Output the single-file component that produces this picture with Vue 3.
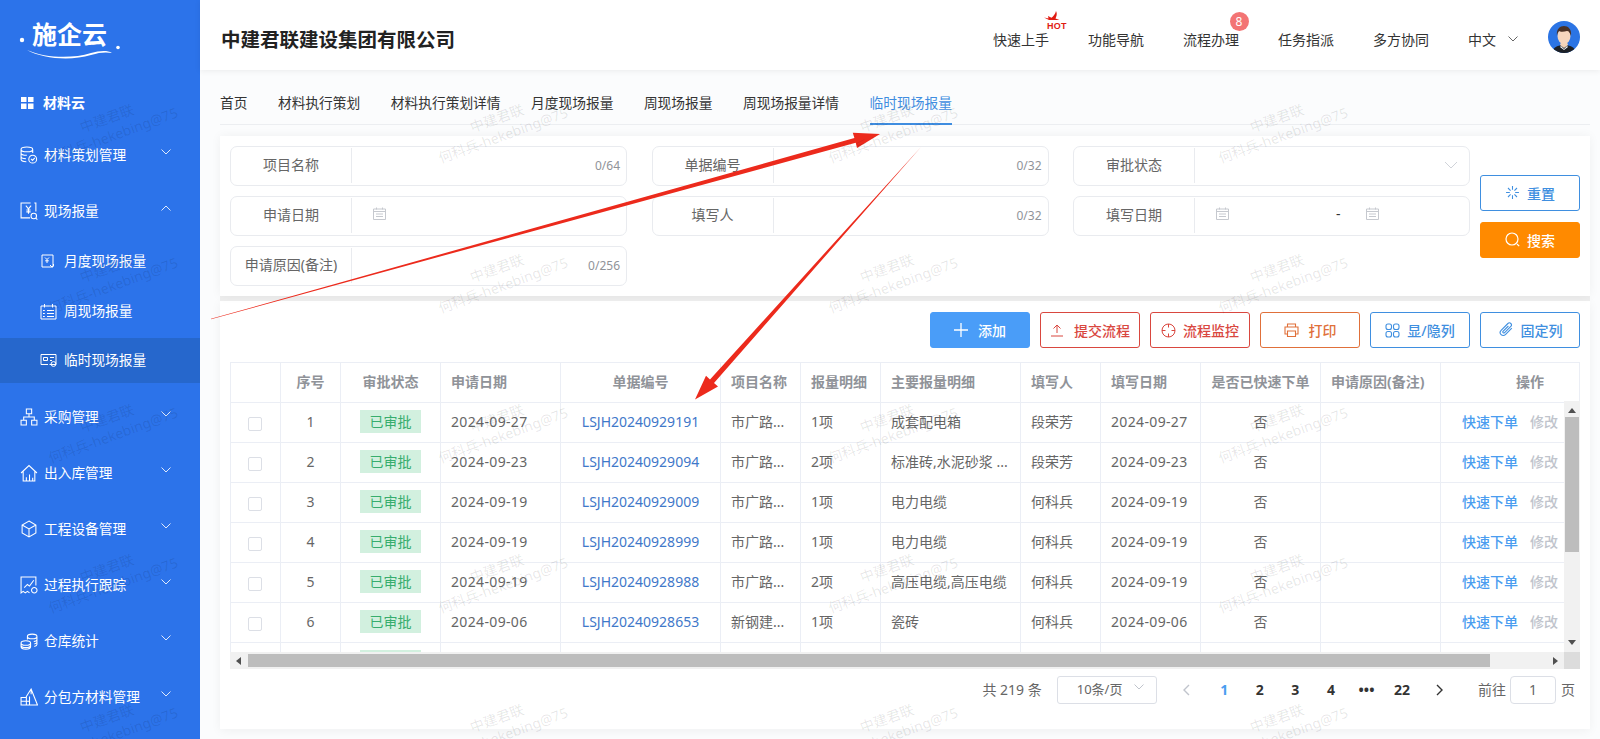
<script setup>
const circle = (x, y, r) => `M${x - r} ${y}a${r} ${r} 0 1 0 ${2 * r} 0a${r} ${r} 0 1 0 ${-2 * r} 0`
const icons = {
  db: 'M1 3.2C1 2 3.5 1 6.5 1S12 2 12 3.2 9.5 5.4 6.5 5.4 1 4.4 1 3.2zM1 3.2v9.4C1 13.8 3.2 14.8 6 14.8M1 6.6c0 1.2 2.4 2.2 5.5 2.2M1 10c0 1.1 2 2 4.6 2.1M12 3.2v3.4M10.4 12.2l1.4 1.4 2.2-2.4' + circle(12, 12.4, 3.7),
  field: 'M10 1H1v14h8.5M13.5 1H15v8M5.5 3.5L8 6.5l2.5-3M8 6.5V11M6 7.5h4M6 9.3h4M15 15.2l1.4 1.4' + circle(13, 13.2, 2.6),
  org: 'M6 1h5v4.5H6zM1 11.5h5V16H1zM11 11.5h5V16h-5zM8.5 5.5v3M3.5 11.5v-3h10v3',
  house: 'M1 8.5L8.5 1.5 16 8.5M3 7v9h11V7M6 15.5v-3M9 15.5v-5.5M12 15.5v-2.5M6 10h.1',
  box: 'M8.5 1L15 4.7v7.6L8.5 16 2 12.3V4.7zM2 4.7l6.5 3.8L15 4.7M8.5 8.5V16',
  track: 'M15 9V1H1v15l2-1.5 2 1.5 2-1.5 2 1.5M4 11l3-3 2 1.5L13 4' + circle(13.5, 13.5, 2.6),
  coins: 'M7 4.2C7 3 9 2 11.5 2S16 3 16 4.2 14 6.4 11.5 6.4 7 5.4 7 4.2zM16 4.2v7.6c0 .8-1 1.4-2.5 1.8M7 4.2v3M16 7c0 .9-1.2 1.7-3 2M16 9.5c0 .8-1 1.5-2.5 1.8M1 10.4C1 9.2 3 8.2 5.5 8.2S10 9.2 10 10.4 8 12.6 5.5 12.6 1 11.6 1 10.4zM1 10.4V14c0 1.2 2 2.2 4.5 2.2S10 15.2 10 14v-3.6M1 12.4c0 1.2 2 2.2 4.5 2.2S10 13.6 10 12.4',
  tri: 'M6 8L10.5 1 16.5 16H1V9h5zM1 12.5h8M6 9v7M9 8v8M10.5 1v5'
}
const menus = [
  { name: '材料策划管理', icon: 'db', open: false },
  { name: '现场报量', icon: 'field', open: true },
  { name: '采购管理', icon: 'org' },
  { name: '出入库管理', icon: 'house' },
  { name: '工程设备管理', icon: 'box' },
  { name: '过程执行跟踪', icon: 'track' },
  { name: '仓库统计', icon: 'coins' },
  { name: '分包方材料管理', icon: 'tri' }
]
const subs = [
  { name: '月度现场报量', d: 'M2 2h11v12H2zM5 4.5l2 2 2-2M7 6.5V10M5.2 7.8h3.6M10 12l2 2 2-2-1-1' },
  { name: '周现场报量', d: 'M1 3h15v13H1zM4.5 1v3.5M12.5 1v3.5M7 7.5h7M7 10.5h7M7 13.5h7M3 7.5h1.8M3 10.5h1.8M3 13.5h1.8' },
  { name: '临时现场报量', d: 'M1 2.5h15v10H9.5M1 2.5v10h7M3.5 5.5h4v3h-4zM10 5.5h4M10 8.5h2' + circle(13.5, 12, 2.4), active: true }
]
const navs = ['快速上手', '功能导航', '流程办理', '任务指派', '多方协同']
const tabs = ['首页', '材料执行策划', '材料执行策划详情', '月度现场报量', '周现场报量', '周现场报量详情', '临时现场报量']
const cols = [50, 60, 100, 120, 160, 80, 80, 140, 80, 100, 120, 120, 139]
const rows = [
  ['1', '2024-09-27', 'LSJH20240929191', '市广路...', '1项', '成套配电箱', '段荣芳'],
  ['2', '2024-09-23', 'LSJH20240929094', '市广路...', '2项', '标准砖,水泥砂浆 ...', '段荣芳'],
  ['3', '2024-09-19', 'LSJH20240929009', '市广路...', '1项', '电力电缆', '何科兵'],
  ['4', '2024-09-19', 'LSJH20240928999', '市广路...', '1项', '电力电缆', '何科兵'],
  ['5', '2024-09-19', 'LSJH20240928988', '市广路...', '2项', '高压电缆,高压电缆', '何科兵'],
  ['6', '2024-09-06', 'LSJH20240928653', '新钢建...', '1项', '瓷砖', '何科兵']
]
const marks = []
for (const y of [126.5, 276.5, 426.5, 576.5, 726.5]) {
  for (const x of [110, 500, 890, 1280]) marks.push({ left: x - 100 + 'px', top: y - 18 + 'px' })
}
const pages = ['1', '2', '3', '4', '•••', '22']
const blankCols = Array.from({ length: 10 }, (_, i) => i)
</script>

<template>
  <div class="page">
    <aside class="side">
      <div class="logo">
        <span class="logo-text">施企云</span>
        <svg class="logo-art" width="130" height="60" viewBox="0 0 130 60">
          <circle cx="22" cy="40" r="2.2" fill="#fff" />
          <circle cx="118" cy="47.5" r="1.8" fill="#fff" />
          <path d="M27 50c18 8 45 9 64 3 8-2 16-3 21 0-5-1-12-1-21 2-20 6-48 4-64-5z" fill="#fff" />
        </svg>
      </div>
      <div class="cloud">
        <svg width="13" height="12" viewBox="0 0 13 12" fill="#fff"><path d="M0 0h5.500v5H0zM7 0h5.500v5H7zM0 6.500h5.500V12H0zM7 6.500h5.500V12H7z" /></svg>
        <span>材料云</span>
      </div>
      <template v-for="m in menus" :key="m.name">
        <div class="menu-item">
          <svg class="menu-icon" width="18" height="18" viewBox="0 0 17 17"><path :d="icons[m.icon]" /></svg>
          <span class="menu-text">{{ m.name }}</span>
          <svg class="caret" :class="{ up: m.open }" width="10" height="6" viewBox="0 0 10 6"><path d="M.5.5L5 5l4.500-4.500" /></svg>
        </div>
        <div v-if="m.open" class="sub-list">
          <div v-for="s in subs" :key="s.name" class="sub-item" :class="{ active: s.active }">
            <svg class="menu-icon" width="17" height="17" viewBox="0 0 17 17"><path :d="s.d" /></svg>
            <span class="sub-text">{{ s.name }}</span>
          </div>
        </div>
      </template>
    </aside>

    <main class="main">
      <header class="head">
        <h1 class="title">中建君联建设集团有限公司</h1>
        <nav class="navs">
          <span v-for="(n, i) in navs" :key="n" class="nav">
            {{ n }}
            <span v-if="i === 0" class="hot">
              <svg width="22" height="13" viewBox="0 0 22 13"><path d="M13 0c1.500 3 .5 5-.5 7.500l4 1.500H6L1 6.500l4.500 1L5 5l3.500 1.800C10.500 5 12.500 3 13 0z" fill="#e01b12" /></svg>
              <b>HOT</b>
            </span>
            <span v-if="i === 2" class="badge">8</span>
          </span>
          <span class="lang">中文
            <svg width="10" height="6" viewBox="0 0 10 6"><path d="M.5.5L5 5l4.500-4.500" fill="none" stroke="#666" /></svg>
          </span>
        </nav>
        <svg class="avatar" width="32" height="32" viewBox="0 0 32 32">
          <defs><clipPath id="av"><circle cx="16" cy="16" r="16" /></clipPath></defs>
          <g clip-path="url(#av)">
            <rect width="32" height="32" fill="#2b74e4" />
            <path d="M4 32c1-6 6-8 12-8s11 2 12 8z" fill="#1d2026" />
            <path d="M12 24l4 3 4-3-1-3h-6z" fill="#f3d3b8" />
            <path d="M13 25l3 3 3-3 1 1-4 3-4-3z" fill="#f4f4f4" />
            <ellipse cx="16" cy="15" rx="6.5" ry="8" fill="#f6d6bd" />
            <path d="M9 15c-1-7 3-10 7-10s8 3 7 10c-1-3-2-5-4-5-3 1-7 1-8 0-1 1-2 3-2 5z" fill="#4a3226" />
          </g>
        </svg>
      </header>

      <div class="content">
        <div class="tabs">
          <span v-for="(t, i) in tabs" :key="t" class="tab" :class="{ on: i === 6 }">{{ t }}</span>
        </div>

        <section class="form-card">
          <div class="form-grid">
            <div class="field"><label>项目名称</label><div class="val"><em>0/64</em></div></div>
            <div class="field"><label>单据编号</label><div class="val"><em>0/32</em></div></div>
            <div class="field"><label>审批状态</label><div class="val">
              <svg class="sel" width="14" height="8" viewBox="0 0 14 8"><path d="M1 1l6 6 6-6" fill="none" stroke="#d0d3d9" /></svg>
            </div></div>
            <div class="field"><label>申请日期</label><div class="val">
              <svg class="cal" width="13" height="13" viewBox="0 0 13 13"><path d="M.5 2h12v10.5H.5zM.5 4.5h12M3.5.5v2M9.5.5v2M3 7h7M3 9.5h7" fill="none" stroke="#c6c9cf" /></svg>
            </div></div>
            <div class="field"><label>填写人</label><div class="val"><em>0/32</em></div></div>
            <div class="field"><label>填写日期</label><div class="val range">
              <svg class="cal" width="13" height="13" viewBox="0 0 13 13"><path d="M.5 2h12v10.5H.5zM.5 4.5h12M3.5.5v2M9.5.5v2M3 7h7M3 9.5h7" fill="none" stroke="#c6c9cf" /></svg>
              <span class="dash">-</span>
              <svg class="cal2" width="13" height="13" viewBox="0 0 13 13"><path d="M.5 2h12v10.5H.5zM.5 4.5h12M3.5.5v2M9.5.5v2M3 7h7M3 9.5h7" fill="none" stroke="#c6c9cf" /></svg>
            </div></div>
            <div class="field"><label>申请原因(备注)</label><div class="val"><em>0/256</em></div></div>
          </div>
          <div class="form-btns">
            <button class="btn b-blue">
              <svg width="15" height="15" viewBox="0 0 14 14"><path d="M7 1v3.500M7 9.500V13M1 7h3.500M9.500 7H13M2.800 2.800l2.400 2.400M8.800 8.800l2.400 2.400M2.800 11.200l2.400-2.400M8.800 5.200l2.400-2.400" fill="none" stroke="#3f8fe0" /></svg>
              重置
            </button>
            <button class="btn b-orange">
              <svg width="15" height="15" viewBox="0 0 15 15"><path d="M12 12l2.200 2.200" stroke="#fff" stroke-width="1.2" fill="none" /><circle cx="7" cy="7" r="6" fill="none" stroke="#fff" stroke-width="1.2" /></svg>
              搜索
            </button>
          </div>
        </section>

        <section class="table-card">
          <div class="toolbar">
            <button class="btn b-add">
              <svg width="14" height="14" viewBox="0 0 14 14"><path d="M7 0v14M0 7h14" stroke="#fff" stroke-width="1.3" /></svg>
              添加
            </button>
            <button class="btn b-red wide">
              <svg width="14" height="14" viewBox="0 0 14 14"><path d="M1 13h12M7 10V2M3.500 5.500L7 2l3.500 3.500" fill="none" stroke="#d9473f" /></svg>
              提交流程
            </button>
            <button class="btn b-red">
              <svg width="15" height="15" viewBox="0 0 15 15"><circle cx="7.5" cy="7.5" r="6.5" fill="none" stroke="#d9473f" /><path d="M7.5 1v3.500M7.5 10.500V14M1 7.500h3.500M10.500 7.500H14" stroke="#d9473f" /></svg>
              流程监控
            </button>
            <button class="btn b-print">
              <svg width="15" height="14" viewBox="0 0 15 14"><path d="M3.500 4V1h8v3M3.500 11H1V4h13v7h-2.500M3.500 8h8v5.500h-8z" fill="none" stroke="#e0703a" stroke-width="1.1" /></svg>
              打印
            </button>
            <button class="btn b-blue2">
              <svg width="15" height="15" viewBox="0 0 15 15" fill="none" stroke="#3f8fe0" stroke-width="1.1"><rect x="1" y="1" width="5.5" height="5.5" rx="2" /><rect x="8.5" y="1" width="5.5" height="5.5" rx="2" /><rect x="1" y="8.5" width="5.5" height="5.5" rx="2" /><rect x="8.5" y="8.5" width="5.5" height="5.5" rx="2" /></svg>
              显/隐列
            </button>
            <button class="btn b-blue2">
              <svg width="16" height="16" viewBox="0 0 16 16"><path d="M13.800 6.200l-6.400 6.400a3 3 0 0 1-4.300-4.300l6.800-6.800a2 2 0 0 1 2.900 2.900L6.400 10.800a1 1 0 0 1-1.400-1.400l5.400-5.400" fill="none" stroke="#3f8fe0" stroke-width="1.1" /></svg>
              固定列
            </button>
          </div>

          <div class="tbl-wrap">
            <table class="tbl">
              <colgroup><col v-for="(c, i) in cols" :key="i" :style="{ width: c + 'px' }" /></colgroup>
              <thead>
                <tr>
                  <th></th><th class="c">序号</th><th class="c">审批状态</th><th>申请日期</th><th class="c">单据编号</th><th>项目名称</th><th>报量明细</th><th>主要报量明细</th><th>填写人</th><th>填写日期</th><th class="c">是否已快速下单</th><th>申请原因(备注)</th><th class="c op-h">操作</th>
                </tr>
              </thead>
              <tbody>
                <tr v-for="r in rows" :key="r[0]">
                  <td class="c"><i class="chk"></i></td>
                  <td class="c">{{ r[0] }}</td>
                  <td class="c"><span class="tag">已审批</span></td>
                  <td class="date">{{ r[1] }}</td>
                  <td class="c link">{{ r[2] }}</td>
                  <td>{{ r[3] }}</td>
                  <td>{{ r[4] }}</td>
                  <td>{{ r[5] }}</td>
                  <td>{{ r[6] }}</td>
                  <td class="date">{{ r[1] }}</td>
                  <td class="c">否</td>
                  <td></td>
                  <td class="c ops"><a>快速下单</a><a class="off">修改</a></td>
                </tr>
                <tr>
                  <td></td><td></td>
                  <td class="c"><span class="tag"></span></td>
                  <td v-for="b in blankCols" :key="b"></td>
                </tr>
              </tbody>
            </table>
            <div class="vbar">
              <i class="arr a-up"></i>
              <div class="vthumb"></div>
              <i class="arr a-down"></i>
            </div>
          </div>
          <div class="hbar">
            <div class="htrack">
              <i class="arr a-left"></i>
              <div class="hthumb"></div>
              <i class="arr a-right"></i>
            </div>
            <div class="corner"></div>
          </div>

          <div class="pager">
            <span class="total">共 219 条</span>
            <span class="psel">10条/页
              <svg width="10" height="6" viewBox="0 0 10 6"><path d="M.5.5L5 5l4.500-4.500" fill="none" stroke="#c0c4cc" /></svg>
            </span>
            <span class="pbtn prev"><svg width="8" height="12" viewBox="0 0 8 12"><path d="M7 1L2 6l5 5" fill="none" stroke="#c0c4cc" stroke-width="1.4" /></svg></span>
            <span v-for="(p, i) in pages" :key="p" class="pbtn num" :class="{ cur: i === 0 }">{{ p }}</span>
            <span class="pbtn next"><svg width="8" height="12" viewBox="0 0 8 12"><path d="M1 1l5 5-5 5" fill="none" stroke="#333" stroke-width="1.4" /></svg></span>
            <span class="goto">前往</span>
            <span class="pinput">1</span>
            <span class="ye">页</span>
          </div>
        </section>
      </div>
    </main>

    <svg class="arrows" width="1600" height="739" viewBox="0 0 1600 739">
      <path d="M211 318.800L854.400 138 852.800 132.700 880 134 857 148 855.700 142.800 211 319.200z" fill="#ec2a1c" />
      <path d="M921 147L710 379.400 706 375.800 695 399.500 718 386.400 714 383z" fill="#ec2a1c" />
    </svg>
    <div class="marks">
      <div v-for="(m, i) in marks" :key="i" class="mark" :style="m">中建君联<br />何科兵-hekebing@75</div>
    </div>
  </div>
</template>

<style>
html, body { margin: 0; padding: 0; }
</style>

<style scoped>
.page {
  position: relative; display: flex; width: 1600px; height: 739px; overflow: hidden;
  font-family: "Noto Sans", "Noto Sans CJK SC", sans-serif; font-size: 14px; color: #666; background: #fbfcfd;
}
.side { width: 200px; flex: none; background: #2c73ea; color: #fff; font-size: 13.7px; }
.logo { position: relative; height: 91px; }
.logo-text { position: absolute; left: 32px; top: 16px; font-size: 25px; line-height: 36px; font-weight: 700; color: #fff; }
.logo-art { position: absolute; left: 0; top: 0; }
.cloud { display: flex; align-items: center; gap: 9px; height: 24px; padding-left: 21px; font-weight: 700; margin-bottom: 12px; font-size: 14px; }
.cloud span { margin-bottom: 2px; }
.menu-item { position: relative; display: flex; align-items: center; height: 56px; padding-left: 20px; }
.menu-icon { fill: none; stroke: #fff; stroke-width: 1; flex: none; }
.menu-text { margin-left: 6px; margin-bottom: 3px; }
.caret { position: absolute; left: 161px; top: 22px; fill: none; stroke: #dfe9fb; }
.caret.up { transform: rotate(180deg); }
.sub-list { display: flex; flex-direction: column; gap: 4.5px; margin-bottom: 6px; }
.sub-item { display: flex; align-items: center; height: 45px; padding-left: 40px; gap: 7px; }
.sub-text { margin-bottom: 3px; }
.sub-item.active { background: #2667cc; }

.main { flex: 1; min-width: 0; display: flex; flex-direction: column; }
.head { display: flex; align-items: center; height: 70px; box-sizing: border-box; padding: 4px 20px 0 21px; background: #fff; box-shadow: 0 1px 6px rgba(0,0,0,.07); position: relative; z-index: 1; }
.title { margin: 3px 0 0; font-size: 19.5px; font-weight: 700; color: #222; }
.navs { margin-left: auto; margin-top: 3px; display: flex; align-items: center; gap: 39px; color: #333; }
.nav { position: relative; }
.hot { position: absolute; left: 50px; top: -18px; width: 24px; height: 20px; }
.hot svg { position: absolute; left: 0; top: 0; }
.hot b { position: absolute; left: 4px; top: 11px; font: 700 9px/9px "Liberation Sans", sans-serif; color: #e01b12; letter-spacing: .2px; }
.badge { position: absolute; left: 46.5px; top: -17px; width: 19px; height: 19px; border-radius: 50%; background: #f37474; color: #fff; font-size: 12px; line-height: 19px; text-align: center; }
.lang { display: inline-flex; align-items: center; gap: 12px; }
.avatar { margin-left: 30px; flex: none; }

.content { flex: 1; padding: 0 10px 0 20px; }
.tabs { display: flex; align-items: center; border-bottom: 1px solid #eceef1; gap: 30.5px; padding-top: 12px; box-sizing: border-box; height: 55px; color: #333; font-size: 13.72px; }
.tab { position: relative; line-height: 20px; }
.tab.on { color: #3f8de0; }
.tab.on::after { content: ""; position: absolute; left: 0; right: 0; top: 30px; height: 2px; background: #3f8de0; }

.form-card { display: flex; gap: 10px; height: 160px; box-sizing: border-box; margin-top: 11px; padding: 10px; background: #fff; box-shadow: 0 0 10px rgba(0,0,0,.05), 0 5px 0 #eee; align-items: center; position: relative; }
.form-grid { display: grid; grid-template-columns: 397px 397px 397px; grid-auto-rows: 40px; gap: 10px 24.5px; align-self: flex-start; }
.field { display: flex; border: 1px solid #e9ebef; border-radius: 7px; box-sizing: border-box; }
.field label { width: 120px; flex: none; display: flex; align-items: center; justify-content: center; border-right: 1px solid #e9ebef; margin: 1px 0 2px; padding-bottom: 3px; color: #666; }
.val { flex: 1; display: flex; align-items: center; justify-content: flex-end; padding-right: 6px; padding-bottom: 2px; color: #909399; position: relative; }
.val em { font-style: normal; font-size: 12px; }
.sel { margin-right: 5px; }
.cal { position: absolute; left: 21px; top: 10px; }
.range .dash { position: absolute; left: 141px; top: 7px; color: #333; }
.cal2 { position: absolute; left: 171px; top: 10px; }
.form-btns { display: flex; flex-direction: column; gap: 11px; }
.btn { display: inline-flex; align-items: center; justify-content: center; gap: 7px; width: 100px; height: 36px; padding: 0; box-sizing: border-box; border-radius: 3px; border: 1px solid; background: #fff; font: 500 14px "Noto Sans", "Noto Sans CJK SC", sans-serif; }
.b-blue, .b-blue2 { border-color: #3f8fe0; color: #3f8fe0; }
.b-orange { border-color: #ff8a00; background: #ff8a00; color: #fff; }
.b-add { border-color: #4a9df8; background: #4a9df8; color: #fff; gap: 10px; }
.b-red { border-color: #d9473f; color: #d9473f; }
.wide { gap: 10px; }
.b-print { border-color: #e0703a; color: #e0703a; gap: 10px; }

.table-card { height: 428px; margin-top: 5px; padding: 11px 10px 0; box-sizing: border-box; background: #fff; box-shadow: 0 2px 10px rgba(0,0,0,.05); }
.toolbar { display: flex; justify-content: flex-end; gap: 10px; margin-bottom: 14px; }
.tbl-wrap { position: relative; height: 290px; overflow: hidden; }
.tbl { width: 1349px; table-layout: fixed; border-collapse: collapse; }
.tbl th, .tbl td { border: 1px solid #ebeef5; padding: 0 10px 3px; text-align: left; white-space: nowrap; overflow: hidden; box-sizing: border-box; height: 40px; }
.tbl th { color: #909399; font-weight: 700; }
.tbl .c { text-align: center; }
.tbl .op-h { padding-left: 50px; }
.date { letter-spacing: .35px; }
.link { color: #3f78c9; }
.tag { display: inline-block; vertical-align: top; margin-top: 1px; width: 61px; height: 23px; line-height: 23px; background: #d2f0df; color: #37ad6e; }
.chk { display: block; width: 14px; height: 14px; margin: 5px 0 0 7px; border: 1px solid #dcdfe6; border-radius: 2px; box-sizing: border-box; }
.ops a { color: #4a9df0; font-weight: 500; margin-right: 12px; }
.ops a.off { color: #c0c4cc; margin-right: 0; }
.vbar { position: absolute; right: 0; top: 39px; bottom: 0; width: 16px; background: #f1f1f1; display: flex; flex-direction: column; align-items: center; }
.vthumb { width: 14px; height: 135px; margin-top: 4px; background: #bdbdbd; }
.arr { display: block; width: 0; height: 0; border: 4px solid transparent; flex: none; }
.a-up { border-top: 0; border-bottom: 5px solid #505050; margin-top: 7px; }
.a-down { border-bottom: 0; border-top: 5px solid #505050; margin-top: auto; margin-bottom: 7px; }
.a-left { border-left: 0; border-right: 5px solid #505050; margin-left: 6px; }
.a-right { border-right: 0; border-left: 5px solid #505050; margin-left: auto; margin-right: 6px; }
.hbar { display: flex; height: 17px; }
.htrack { flex: 1; display: flex; align-items: center; background: #f1f1f1; }
.hthumb { width: 1242px; height: 13px; margin-left: 7px; background: #bdbdbd; }
.corner { width: 16px; background: #dcdcdc; }

.pager { display: flex; align-items: center; height: 42px; padding: 0 5px 0 0; justify-content: flex-end; }
.total { margin-right: 15px; margin-bottom: 2px; }
.psel { position: relative; width: 100px; height: 28px; box-sizing: border-box; border: 1px solid #dcdfe6; border-radius: 3px; line-height: 25px; padding-left: 19px; font-size: 13px; margin-right: 11px; }
.psel svg { position: absolute; right: 12px; top: 7px; }
.pbtn { width: 35.6px; text-align: center; display: flex; align-items: center; justify-content: center; height: 28px; }
.prev { margin-right: 3px; }
.next { margin-left: 2.5px; }
.num { font-weight: 700; color: #333; padding-bottom: 2px; box-sizing: border-box; }
.num.cur { color: #4a9df0; }
.goto { margin-left: 20px; margin-right: 4px; margin-bottom: 2px; }
.pinput { width: 46px; height: 28px; box-sizing: border-box; border: 1px solid #dcdfe6; border-radius: 4px; text-align: center; line-height: 26px; margin-right: 5px; }
.ye { margin-bottom: 2px; }

.arrows { position: absolute; left: 0; top: 0; pointer-events: none; }
.marks { position: absolute; inset: 0; pointer-events: none; overflow: hidden; }
.mark { position: absolute; width: 200px; text-align: center; font-size: 14px; line-height: 18px; color: rgba(0,0,0,.1); transform: rotate(-20deg); white-space: nowrap; }
</style>
